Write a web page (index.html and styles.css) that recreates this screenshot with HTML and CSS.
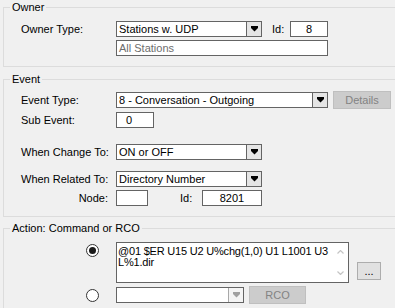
FILE: index.html
```html
<!DOCTYPE html>
<html>
<head>
<meta charset="utf-8">
<link rel="stylesheet" href="styles.css">
</head>
<body>
<fieldset class="group owner">
  <legend>Owner</legend>
  <div class="row r-first">
    <span class="lbl">Owner Type:</span>
    <div class="combo w146"><span class="val">Stations w. UDP</span><span class="drop"><svg width="7" height="6" viewBox="0 0 7 6"><polygon points="0,0 7,0 7,2 3.5,5.5 0,2"/></svg></span></div>
    <span class="idlbl">Id:</span>
    <div class="box w38 center">8</div>
  </div>
  <div class="row r-gap3">
    <span class="lbl"></span>
    <div class="box w212 hint">All Stations</div>
  </div>
</fieldset>

<fieldset class="group event">
  <legend>Event</legend>
  <div class="row r-type">
    <span class="lbl">Event Type:</span>
    <div class="combo w212"><span class="val">8 - Conversation - Outgoing</span><span class="drop"><svg width="7" height="6" viewBox="0 0 7 6"><polygon points="0,0 7,0 7,2 3.5,5.5 0,2"/></svg></span></div>
    <button class="btn disabled details">Details</button>
  </div>
  <div class="row r-sub">
    <span class="lbl">Sub Event:</span>
    <div class="box w38 pad10">0</div>
  </div>
  <div class="row r-change">
    <span class="lbl">When Change To:</span>
    <div class="combo w146"><span class="val">ON or OFF</span><span class="drop"><svg width="7" height="6" viewBox="0 0 7 6"><polygon points="0,0 7,0 7,2 3.5,5.5 0,2"/></svg></span></div>
  </div>
  <div class="row r-related">
    <span class="lbl">When Related To:</span>
    <div class="combo w146"><span class="val">Directory Number</span><span class="drop"><svg width="7" height="6" viewBox="0 0 7 6"><polygon points="0,0 7,0 7,2 3.5,5.5 0,2"/></svg></span></div>
  </div>
  <div class="row r-gap3">
    <span class="lbl right">Node:</span>
    <div class="box w32"></div>
    <span class="idlbl2">Id:</span>
    <div class="box w60 center">8201</div>
  </div>
</fieldset>

<fieldset class="group action">
  <legend>Action: Command or RCO</legend>
  <div class="row r-cmd">
    <span class="lbl radiocol top"><span class="radio on"></span></span>
    <div class="memo">
      <div class="memo-text">@01 $ER U15 U2 U%chg(1,0) U1 L1001 U3<br>L%1.dir</div>
      <div class="memo-scroll">
        <svg width="7" height="4" viewBox="0 0 7 4"><polyline points="0.5,3.5 3.5,0.5 6.5,3.5" fill="none" stroke="#c4c4c4" stroke-width="1.2"/></svg>
        <svg width="7" height="4" viewBox="0 0 7 4"><polyline points="0.5,0.5 3.5,3.5 6.5,0.5" fill="none" stroke="#c4c4c4" stroke-width="1.2"/></svg>
      </div>
    </div>
    <button class="btn dots">...</button>
  </div>
  <div class="row r-rco">
    <span class="lbl radiocol"><span class="radio"></span></span>
    <div class="combo w128"><span class="val"></span><span class="drop off"><svg width="7" height="6" viewBox="0 0 7 6"><polygon points="0,0 7,0 7,2 3.5,5.5 0,2"/></svg></span></div>
    <button class="btn disabled rco">RCO</button>
  </div>
</fieldset>
</body>
</html>
```

FILE: styles.css
```css
html, body {
  margin: 0;
  padding: 0;
  overflow: hidden;
  background: #f0f0f0;
}

body {
  font-family: "Liberation Sans", Arial, sans-serif;
  font-size: 11px;
  color: #000;
  width: 395px;
  height: 308px;
}

.group {
  margin: 0 -20px 0 3px;
  border: 1px solid #dcdcdc;
  padding: 0 0 10px 6px;
  min-width: 0;
}

.group legend {
  padding: 0 2px;
  height: 15px;
  line-height: 15px;
}

.event { margin-top: 5px; }
.action { margin-top: 4px; padding-bottom: 30px; }

.row {
  display: flex;
  align-items: center;
  padding-left: 11px;
}

.r-first { margin-top: 6px; }
.r-gap3 { margin-top: 3px; }
.r-type { margin-top: 5px; height: 16px; }
.r-sub { margin-top: 4px; }
.r-change { margin-top: 16px; }
.r-related { margin-top: 11px; }
.r-cmd { margin-top: 6px; align-items: flex-start; }
.r-rco { margin-top: 3px; height: 18px; }

.lbl {
  width: 95px;
  flex: none;
  line-height: 16px;
  white-space: nowrap;
}

.lbl.right {
  text-align: right;
  width: 87px;
  padding-right: 8px;
}

.box, .combo {
  box-sizing: border-box;
  height: 16px;
  border: 1px solid #646464;
  background: #fff;
  line-height: 14px;
  flex: none;
  white-space: nowrap;
  overflow: hidden;
}

.box { padding-left: 2px; }
.box.center { text-align: center; padding-left: 0; }
.box.pad10 { padding-left: 9px; }
.box.hint { color: #6d6d6d; }

.w32 { width: 32px; }
.w38 { width: 38px; }
.w60 { width: 60px; }
.w128 { width: 128px; }
.w146 { width: 146px; }
.w212 { width: 212px; }

.combo { display: flex; }
.combo .val { flex: 1; padding-left: 2px; overflow: hidden; }
.combo .drop {
  width: 14px;
  flex: none;
  border-left: 1px solid #646464;
  background: #e5e5e5;
  display: flex;
  align-items: center;
  justify-content: center;
}
.combo .drop svg { fill: #000; }
.combo .drop.off { background: #f4f4f4; border-left-color: #a8a8a8; }
.combo .drop.off svg { fill: #a0a0a0; }

.idlbl { width: 18px; margin-left: 10px; flex: none; }
.idlbl2 { width: 22px; margin-left: 32px; flex: none; }

.btn {
  font: inherit;
  box-sizing: border-box;
  height: 18px;
  padding: 0;
  margin: 0;
  border: 1px solid #adadad;
  background: #e1e1e1;
  color: #000;
  line-height: 16px;
  flex: none;
}
.btn.disabled {
  background: #cccccc;
  border-color: #bfbfbf;
  color: #838383;
}
.details { width: 58px; margin-left: 5px; }
.rco { width: 57px; margin-left: 5px; }
.dots { width: 24px; margin-left: 8px; align-self: flex-end; margin-bottom: 3px; }

.radiocol {
  display: flex;
  align-items: center;
  padding-left: 65px;
  width: 30px;
}
.radiocol.top { padding-top: 2px; }

.radio {
  box-sizing: border-box;
  width: 13px;
  height: 13px;
  border-radius: 50%;
  border: 1px solid #333;
  background: #fff;
  display: flex;
  align-items: center;
  justify-content: center;
}
.radio.on::after {
  content: "";
  width: 7px;
  height: 7px;
  border-radius: 50%;
  background: #1a1a1a;
}

.memo {
  box-sizing: border-box;
  width: 233px;
  height: 41px;
  border: 1px solid #646464;
  background: #fff;
  display: flex;
  flex: none;
}
.memo-text {
  flex: 1;
  padding: 3px 0 0 1px;
  line-height: 11px;
  letter-spacing: -0.2px;
  white-space: nowrap;
  overflow: hidden;
}
.memo-scroll {
  width: 16px;
  flex: none;
  display: flex;
  flex-direction: column;
  align-items: center;
  justify-content: space-between;
  padding: 7px 0 7px;
  box-sizing: border-box;
}
```
